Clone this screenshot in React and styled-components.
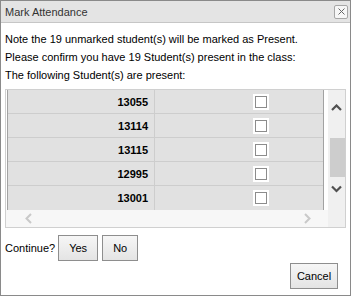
import React from "react";
import styled, { createGlobalStyle } from "styled-components";

const GlobalStyle = createGlobalStyle`
  html, body {
    margin: 0;
    padding: 0;
    background: #fff;
  }
  body {
    font-family: "Liberation Sans", Arial, sans-serif;
    font-size: 11px;
    color: #000;
  }
`;

const Dialog = styled.div`
  box-sizing: border-box;
  width: 351px;
  height: 296px;
  border: 1px solid #8a8a8a;
  background: #fff;
  display: flex;
  flex-direction: column;
`;

const TitleBar = styled.div`
  height: 21px;
  flex: none;
  border-bottom: 1px solid #c6c6c6;
  background: #e4e4e4;
  display: flex;
  align-items: center;
  justify-content: space-between;
  padding: 0 2px 0 4px;
  color: #333;
`;

const CloseBtn = styled.div`
  box-sizing: border-box;
  width: 14px;
  height: 14px;
  border: 1px solid #a6a6a6;
  border-radius: 2px;
  background: #f6f6f6;
  display: flex;
  align-items: center;
  justify-content: center;
`;

const Body = styled.div`
  flex: 1;
  display: flex;
  flex-direction: column;
  padding: 7px 4px 0;
`;

const Message = styled.div`
  line-height: 18px;
  white-space: nowrap;
`;

const ListBox = styled.div`
  margin-top: 5px;
  border: 1px solid #d0d0d0;
  display: flex;
  flex-direction: column;
`;

const ListMain = styled.div`
  display: flex;
  height: 120px;
`;

const Viewport = styled.div`
  flex: 1;
  overflow: hidden;
  padding-left: 1px;
`;

const Table = styled.div`
  width: 317px;
  box-sizing: border-box;
  border-left: 1px solid #a2a2a2;
  border-right: 1px solid #a2a2a2;
  border-bottom: 1px solid #a2a2a2;
  background: #e1e1e1;
`;

const Row = styled.div`
  display: grid;
  grid-template-columns: 147px 1fr;
  height: 24px;
  box-sizing: border-box;
  border-bottom: ${(p) => (p.last ? "none" : "1px solid #cdcdcd")};
`;

const NumCell = styled.div`
  border-right: 1px solid #cdcdcd;
  display: flex;
  align-items: center;
  justify-content: flex-end;
  padding-right: 6px;
  font-weight: bold;
`;

const CheckCell = styled.div`
  display: flex;
  align-items: center;
  padding-left: 100px;
`;

const Checkbox = styled.span`
  display: block;
  width: 10px;
  height: 10px;
  border: 1px solid #8c8c8c;
  background: #fff;
  box-shadow: 0 0 0 2px #fff;
`;

const VScroll = styled.div`
  width: 17px;
  flex: none;
  background: #f0f0f0;
  display: flex;
  flex-direction: column;
  align-items: center;
`;

const ArrowBox = styled.div`
  height: 20px;
  margin-top: ${(p) => p.top}px;
  display: flex;
  align-items: center;
  justify-content: center;
`;

const Thumb = styled.div`
  align-self: stretch;
  margin: 20px 0 0 2px;
  height: 39px;
  background: #cdcdcd;
`;

const HScrollRow = styled.div`
  display: flex;
  height: 17px;
`;

const HScroll = styled.div`
  flex: 1;
  background: #f7f7f7;
  display: flex;
  align-items: center;
  justify-content: space-between;
  padding: 0 17px 0 19px;
`;

const Corner = styled.div`
  width: 17px;
  background: #f0f0f0;
`;

const ContinueRow = styled.div`
  display: flex;
  align-items: center;
  margin-top: 7px;
`;

const Label = styled.span`
  margin-right: 3px;
`;

const Button = styled.button`
  box-sizing: border-box;
  width: ${(p) => p.w}px;
  height: 26px;
  margin-right: 4px;
  padding: 0;
  border: 1px solid #8e8e8e;
  border-radius: 0;
  background: linear-gradient(#f6f6f6, #e4e4e4);
  font-family: "Liberation Sans", Arial, sans-serif;
  font-size: 11px;
  color: #000;
`;

const FooterRow = styled.div`
  display: flex;
  justify-content: flex-end;
  margin-top: 2px;
  padding-right: 4px;
`;

const Chevron = ({ dir, color }) => {
  const paths = {
    up: "M1 6 L5.5 1.5 L10 6",
    down: "M1 1.5 L5.5 6 L10 1.5",
  };
  return (
    <svg width="11" height="8" viewBox="0 0 11 8">
      <path d={paths[dir]} fill="none" stroke={color} strokeWidth="2.2" />
    </svg>
  );
};

const SideChevron = ({ dir }) => (
  <svg width="7" height="11" viewBox="0 0 7 11">
    <path
      d={dir === "left" ? "M6 1 L1.5 5.5 L6 10" : "M1 1 L5.5 5.5 L1 10"}
      fill="none"
      stroke="#c9c9c9"
      strokeWidth="2"
    />
  </svg>
);

const students = ["13055", "13114", "13115", "12995", "13001"];

export default function App() {
  return (
    <>
      <GlobalStyle />
      <Dialog>
        <TitleBar>
          <span>Mark Attendance</span>
          <CloseBtn>
            <svg width="7" height="7" viewBox="0 0 7 7">
              <path d="M0.5 0.5 L6.5 6.5 M6.5 0.5 L0.5 6.5" stroke="#666" strokeWidth="1" />
            </svg>
          </CloseBtn>
        </TitleBar>
        <Body>
          <Message>Note the 19 unmarked student(s) will be marked as Present.</Message>
          <Message>Please confirm you have 19 Student(s) present in the class:</Message>
          <Message>The following Student(s) are present:</Message>
          <ListBox>
            <ListMain>
              <Viewport>
                <Table>
                  {students.map((id, i) => (
                    <Row key={id} last={i === students.length - 1}>
                      <NumCell>{id}</NumCell>
                      <CheckCell>
                        <Checkbox />
                      </CheckCell>
                    </Row>
                  ))}
                </Table>
              </Viewport>
              <VScroll>
                <ArrowBox top={8}>
                  <Chevron dir="up" color="#505050" />
                </ArrowBox>
                <Thumb />
                <ArrowBox top={2}>
                  <Chevron dir="down" color="#505050" />
                </ArrowBox>
              </VScroll>
            </ListMain>
            <HScrollRow>
              <HScroll>
                <SideChevron dir="left" />
                <SideChevron dir="right" />
              </HScroll>
              <Corner />
            </HScrollRow>
          </ListBox>
          <ContinueRow>
            <Label>Continue?</Label>
            <Button w={40}>Yes</Button>
            <Button w={36}>No</Button>
          </ContinueRow>
          <FooterRow>
            <Button w={48}>Cancel</Button>
          </FooterRow>
        </Body>
      </Dialog>
    </>
  );
}
